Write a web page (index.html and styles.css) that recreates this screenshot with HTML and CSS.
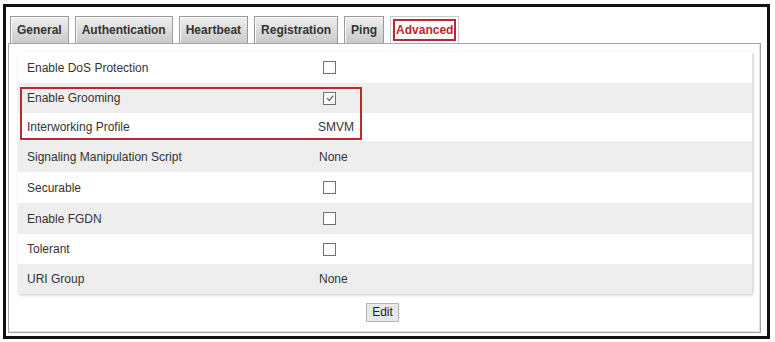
FILE: index.html
```html
<!DOCTYPE html>
<html>
<head>
<meta charset="utf-8">
<link rel="stylesheet" href="styles.css">
</head>
<body>
<div class="frame">
  <div class="tabs">
    <div class="tab">General</div>
    <div class="tab">Authentication</div>
    <div class="tab">Heartbeat</div>
    <div class="tab">Registration</div>
    <div class="tab">Ping</div>
    <div class="tab tab-active"><span class="tab-mark">Advanced</span></div>
  </div>
  <div class="panel">
    <div class="card">
      <div class="row tall"><span class="label">Enable DoS Protection</span><span class="value"><span class="box"></span></span></div>
      <div class="group">
        <div class="row alt"><span class="label">Enable Grooming</span><span class="value"><span class="box"><svg class="check" viewBox="0 0 10 10" width="10" height="10"><path d="M2 5.2 L4.2 7.4 L8.3 2.6" fill="none" stroke="#555" stroke-width="1.2"/></svg></span></span></div>
        <div class="row compact"><span class="label">Interworking Profile</span><span class="value text-smvm">SMVM</span></div>
        <div class="highlight"></div>
      </div>
      <div class="row alt tall"><span class="label">Signaling Manipulation Script</span><span class="value">None</span></div>
      <div class="row tall"><span class="label">Securable</span><span class="value"><span class="box"></span></span></div>
      <div class="row alt tall"><span class="label">Enable FGDN</span><span class="value"><span class="box"></span></span></div>
      <div class="row"><span class="label">Tolerant</span><span class="value"><span class="box"></span></span></div>
      <div class="row alt"><span class="label">URI Group</span><span class="value">None</span></div>
    </div>
    <div class="actions"><button class="btn">Edit</button></div>
  </div>
</div>
</body>
</html>
```

FILE: styles.css
```css
html, body {
  margin: 0;
  padding: 0;
  background: #fff;
}
body {
  font-family: "Liberation Sans", Arial, sans-serif;
  font-size: 12px;
  color: #333;
}
.frame {
  width: 759px;
  height: 320px;
  border: 3px solid #111;
  margin: 4px 0 0 3px;
  padding: 9px 0 0 2px;
  box-sizing: content-box;
  background: #fff;
}
.tabs {
  display: flex;
  gap: 6px;
  margin-left: 2px;
  height: 27px;
}
.tab {
  height: 26px;
  line-height: 26px;
  padding: 0 6px;
  border: 1px solid #9a9a9a;
  border-bottom: none;
  background: linear-gradient(#f0f0f0, #c9c9c9);
  font-weight: bold;
  color: #333;
  box-shadow: inset 1px 1px 0 #fafafa;
}
.tab-active {
  background: #fff;
  border-color: #c8c8c8;
  padding: 2px 2px 0 2px;
  height: 24px;
  box-shadow: none;
}
.tab-mark {
  display: block;
  height: 18px;
  line-height: 18px;
  border: 2px solid #c0262f;
  padding: 0 1px;
  color: #c0262f;
}
.panel {
  width: 742px;
  height: 280px;
  border: 1px solid #a6a6a6;
  box-shadow: inset -1px -1px 0 #e2e2e2;
  padding: 8px 0 0 9px;
  box-sizing: content-box;
}
.card {
  width: 734px;
  background: #fff;
  box-shadow: 1px 1px 3px rgba(0, 0, 0, 0.22);
}
.group {
  position: relative;
}
.row {
  display: grid;
  grid-template-columns: 292px 1fr;
  align-items: center;
  height: 30px;
  padding-left: 9px;
}
.row.tall {
  height: 31px;
}
.row.compact {
  height: 28px;
}
.row.alt {
  background: #eeeeee;
}
.value {
  display: flex;
  align-items: center;
}
.text-smvm {
  margin-left: -1px;
}
.box {
  width: 11px;
  height: 11px;
  margin-left: 4px;
  border: 1px solid #707070;
  background: #fff;
  display: flex;
  align-items: center;
  justify-content: center;
}
.check {
  display: block;
}
.highlight {
  position: absolute;
  left: 2px;
  top: 4px;
  width: 338px;
  height: 49px;
  border: 2px solid #c0262f;
  pointer-events: none;
}
.actions {
  display: flex;
  justify-content: center;
  margin-top: 9px;
  padding-right: 13px;
}
.btn {
  font-family: "Liberation Sans", Arial, sans-serif;
  font-size: 12px;
  color: #222;
  height: 19px;
  padding: 0 5px;
  border: 1px solid #b4b4b4;
  background: #e8e8e8;
  border-radius: 0;
  line-height: 17px;
}
```
